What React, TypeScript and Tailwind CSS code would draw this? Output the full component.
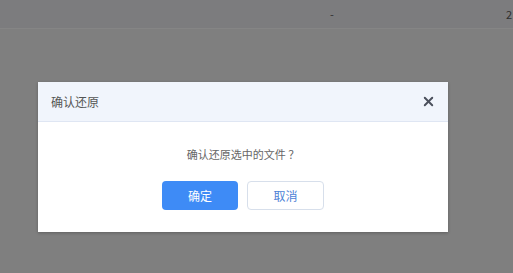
import { X } from "lucide-react";

const font = { fontFamily: '"Noto Sans CJK SC", "Liberation Sans", sans-serif' };

export default function App() {
  return (
    <div className="relative h-[273px] w-[513px] overflow-hidden bg-[#7f7f7f]" style={font}>
      {/* page behind the overlay */}
      <div className="flex h-[29px] items-center border-b border-[#858585] bg-[#7c7c7e] text-[11px] text-[#2e2e2e]">
        <span className="ml-[330px] leading-none">-</span>
        <span className="ml-auto mr-[1px] leading-none">2</span>
      </div>

      {/* dialog */}
      <div className="absolute left-[38px] top-[82px] w-[410px] bg-white shadow-[0_1px_3px_rgba(0,0,0,0.25)]">
        <div className="flex h-[40px] items-center justify-between border-b border-[#dfe6f3] bg-[#f1f5fc] pl-[13px] pr-[12px]">
          <span className="text-[12px] text-[#555]">确认还原</span>
          <X size={15} strokeWidth={3} className="text-[#4b505c]" />
        </div>
        <div className="flex flex-col items-center pt-[24px] pb-[22px]">
          <p className="text-[11px] leading-[16px] text-[#666]">确认还原选中的文件 ？</p>
          <div className="mt-[19px] flex gap-[9px]">
            <button className="h-[29px] w-[76px] rounded-[4px] bg-[#3e8bf6] text-[12px] text-white">
              确定
            </button>
            <button className="h-[29px] w-[77px] rounded-[4px] border border-[#d7dfeb] bg-white text-[12px] text-[#4d82d6]">
              取消
            </button>
          </div>
        </div>
      </div>
    </div>
  );
}
